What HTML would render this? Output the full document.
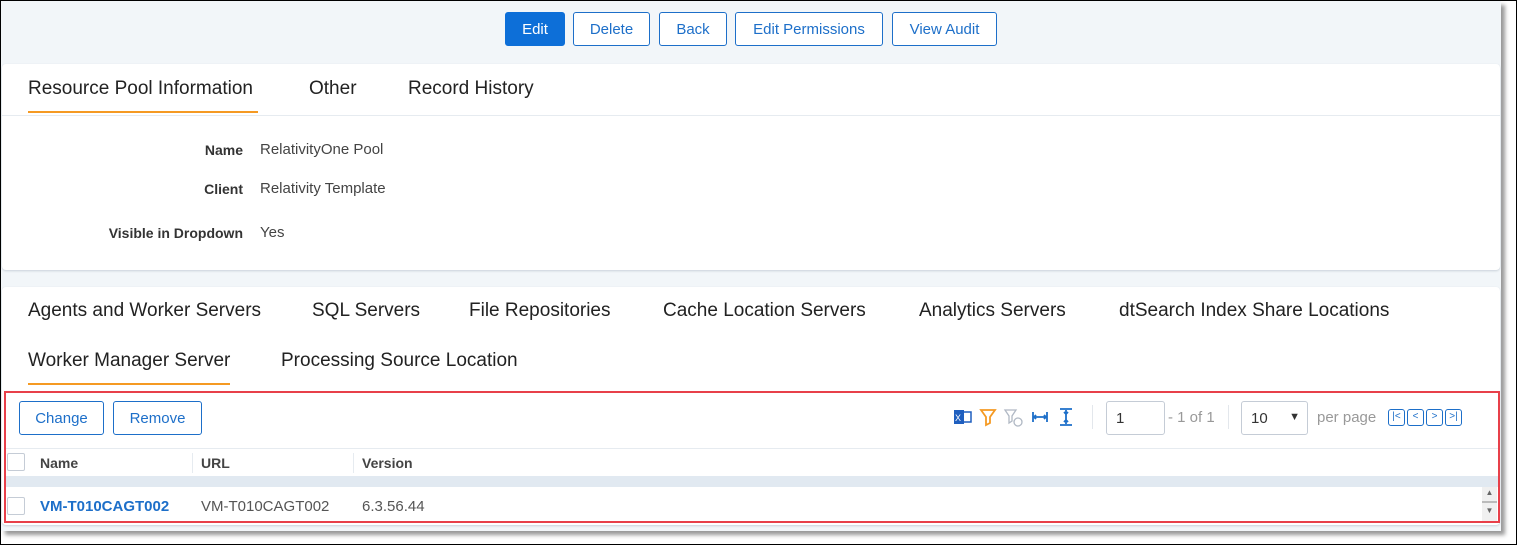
<!DOCTYPE html>
<html><head><style>
*{margin:0;padding:0;box-sizing:border-box}
body{width:1517px;height:545px;background:#fff;font-family:"Liberation Sans",sans-serif;position:relative;overflow:hidden}
.frame{position:absolute;left:0;top:0;width:1517px;height:545px;border:1px solid #000}
.bg{position:absolute;left:1px;top:1px;width:1500px;height:530px;background:#f2f6f9;box-shadow:4px 4px 4px #999}
.a{position:absolute;white-space:nowrap}
.btn{position:absolute;top:12px;height:34px;border:1px solid #1d6fc9;border-radius:3px;color:#1d6fc9;background:#fff;font-size:15px;line-height:34px;text-align:center}
.card{position:absolute;left:2px;width:1498px;background:#fff;border-radius:4px;box-shadow:0 1px 2px #c9d0d8}
.tab{position:absolute;font-size:19px;color:#222}
.lbl{position:absolute;font-size:14px;font-weight:bold;color:#333;text-align:right;width:240px;left:3px}
.val{position:absolute;left:260px;font-size:15px;color:#444}
.sb{position:absolute;height:34px;border:1px solid #1d6fc9;border-radius:3px;color:#1d6fc9;font-size:15px;line-height:34px;text-align:center;top:401px}
.pg{position:absolute;top:409px;width:17px;height:17px;border:1.5px solid #1d6fc9;border-radius:3px;color:#1d6fc9;font-size:10px;line-height:14px;text-align:center}
</style></head><body>
<div class="bg"></div>
<div class="btn" style="left:505px;width:60px;background:#0d6fd8;border-color:#0d6fd8;color:#fff">Edit</div>
<div class="btn" style="left:573px;width:77px">Delete</div>
<div class="btn" style="left:659px;width:68px">Back</div>
<div class="btn" style="left:735px;width:148px">Edit Permissions</div>
<div class="btn" style="left:892px;width:105px">View Audit</div>

<div class="card" style="top:64px;height:206px"></div>
<div class="a" style="left:2px;top:115px;width:1498px;height:1px;background:#e6ebf0"></div>
<div class="tab" style="left:28px;top:78px">Resource Pool Information</div>
<div class="a" style="left:28px;top:111px;width:230px;height:2px;background:#f59a23"></div>
<div class="tab" style="left:309px;top:78px">Other</div>
<div class="tab" style="left:408px;top:78px">Record History</div>
<div class="lbl" style="top:142px">Name</div><div class="val" style="top:141px">RelativityOne Pool</div>
<div class="lbl" style="top:181px">Client</div><div class="val" style="top:180px">Relativity Template</div>
<div class="lbl" style="top:225px">Visible in Dropdown</div><div class="val" style="top:224px">Yes</div>

<div class="card" style="top:287px;height:238px"></div>
<div class="tab" style="left:28px;top:300px">Agents and Worker Servers</div>
<div class="tab" style="left:312px;top:300px">SQL Servers</div>
<div class="tab" style="left:469px;top:300px">File Repositories</div>
<div class="tab" style="left:663px;top:300px">Cache Location Servers</div>
<div class="tab" style="left:919px;top:300px">Analytics Servers</div>
<div class="tab" style="left:1119px;top:300px">dtSearch Index Share Locations</div>
<div class="tab" style="left:28px;top:350px">Worker Manager Server</div>
<div class="a" style="left:28px;top:383px;width:202px;height:2px;background:#f59a23"></div>
<div class="tab" style="left:281px;top:350px">Processing Source Location</div>

<div class="sb" style="left:19px;width:85px">Change</div>
<div class="sb" style="left:113px;width:89px">Remove</div>
<svg class="a" style="left:952px;top:406px" width="130" height="22" viewBox="0 0 130 22">
<rect x="2" y="4" width="10" height="14" fill="#1f5fbf"/><rect x="9" y="6" width="10" height="10" fill="none" stroke="#1f5fbf" stroke-width="1.5"/><text x="3" y="15" font-size="9" fill="#fff" font-family="Liberation Sans">X</text>
<path d="M29 4h14l-5 7v6l-4 2v-8z" fill="none" stroke="#f59a23" stroke-width="1.8"/>
<path d="M53 4h11l-4 6v5l-3 2v-7z" fill="none" stroke="#b0b8c4" stroke-width="1.3"/><circle cx="66" cy="16" r="4" fill="none" stroke="#b0b8c4" stroke-width="1.3"/>
<path d="M81 6v10M95 6v10M82 11h12M84 9l-2 2 2 2M92 9l2 2-2 2" stroke="#1d6fc9" stroke-width="1.8" fill="none"/>
<path d="M108 3h12M108 19h12M114 4v14M112 6l2 2 2-2M112 16l2-2 2 2" stroke="#1d6fc9" stroke-width="1.8" fill="none"/>
</svg>
<div class="a" style="left:1092px;top:405px;width:1px;height:24px;background:#e3e7ec"></div>
<div class="a" style="left:1106px;top:401px;width:59px;height:34px;border:1px solid #c5ccd6;border-radius:3px;font-size:15px;color:#333;padding:8px 9px">1</div>
<div class="a" style="left:1168px;top:409px;font-size:15px;color:#999">- 1 of 1</div>
<div class="a" style="left:1228px;top:405px;width:1px;height:24px;background:#e3e7ec"></div>
<div class="a" style="left:1241px;top:401px;width:67px;height:34px;border:1px solid #c5ccd6;border-radius:3px;font-size:15px;color:#333;padding:8px 9px">10<span style="position:absolute;right:7px;top:9px;font-size:11px">▼</span></div>
<div class="a" style="left:1317px;top:409px;font-size:15px;color:#999">per page</div>
<div class="pg" style="left:1388px">|&lt;</div>
<div class="pg" style="left:1407px">&lt;</div>
<div class="pg" style="left:1426px">&gt;</div>
<div class="pg" style="left:1445px">&gt;|</div>

<div class="a" style="left:6px;top:448px;width:1492px;height:1px;background:#e6ebf0"></div>
<div class="a" style="left:7px;top:453px;width:18px;height:18px;border:1px solid #c5ccd6;border-radius:2px"></div>
<div class="a" style="left:40px;top:455px;font-size:14px;font-weight:bold;color:#444">Name</div>
<div class="a" style="left:192px;top:453px;width:1px;height:20px;background:#e6ebf0"></div>
<div class="a" style="left:201px;top:455px;font-size:14px;font-weight:bold;color:#444">URL</div>
<div class="a" style="left:353px;top:453px;width:1px;height:20px;background:#e6ebf0"></div>
<div class="a" style="left:362px;top:455px;font-size:14px;font-weight:bold;color:#444">Version</div>
<div class="a" style="left:6px;top:476px;width:1492px;height:11px;background:#e1e9f1"></div>
<div class="a" style="left:7px;top:497px;width:18px;height:18px;border:1px solid #c5ccd6;border-radius:2px"></div>
<div class="a" style="left:40px;top:498px;font-size:15px;font-weight:bold;color:#1d6fc9">VM-T010CAGT002</div>
<div class="a" style="left:201px;top:498px;font-size:15px;color:#555">VM-T010CAGT002</div>
<div class="a" style="left:362px;top:498px;font-size:15px;color:#555">6.3.56.44</div>
<div class="a" style="left:1482px;top:487px;width:15px;height:34px;background:#f0f0f0;font-size:8px;color:#666;text-align:center;line-height:12px">▲<br><span style="display:block;height:2px;background:#bbb;margin:2px 0"></span>▼</div>

<div class="a" style="left:4px;top:391px;width:1496px;height:132px;border:2px solid #e8404a"></div>
<div class="frame"></div>
</body></html>
